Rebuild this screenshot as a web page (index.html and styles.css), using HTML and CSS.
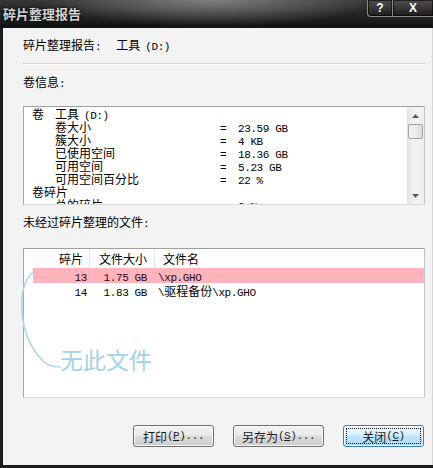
FILE: index.html
```html
<!DOCTYPE html>
<html lang="zh-CN">
<head>
<meta charset="utf-8">
<title>碎片整理报告</title>
<link rel="stylesheet" href="styles.css">
</head>
<body>
<div class="window">
  <div class="titlebar">
    <div class="title">碎片整理报告</div>
    <div class="tb-btns">
      <div class="tb-btn help">?</div>
      <div class="tb-btn xbtn">X</div>
    </div>
  </div>
  <div class="body">
    <div class="line">碎片整理报告<span class="a">:</span><span class="vol">工具</span><span class="a sp">(D:)</span></div>
    <div class="sep"></div>
    <div class="line label1">卷信息<span class="a">:</span></div>
    <div class="listbox info">
      <div class="info-content">
        <div class="irow"><span class="lead">卷</span><span>工具</span><span class="a sp">(D:)</span></div>
        <div class="irow"><span class="k ind">卷大小</span><span class="eq a">=</span><span class="a">23.59 GB</span></div>
        <div class="irow"><span class="k ind">簇大小</span><span class="eq a">=</span><span class="a">4 KB</span></div>
        <div class="irow"><span class="k ind">已使用空间</span><span class="eq a">=</span><span class="a">18.36 GB</span></div>
        <div class="irow"><span class="k ind">可用空间</span><span class="eq a">=</span><span class="a">5.23 GB</span></div>
        <div class="irow"><span class="k ind">可用空间百分比</span><span class="eq a">=</span><span class="a">22 %</span></div>
        <div class="irow"><span class="k">卷碎片</span></div>
        <div class="irow"><span class="k ind">总的碎片</span><span class="eq a">=</span><span class="a">0 %</span></div>
      </div>
      <div class="scrollbar">
        <div class="sb-btn"><svg width="7" height="4" viewBox="0 0 7 4"><polygon points="3.5,0 7,4 0,4" fill="#5c5c5c"/></svg></div>
        <div class="sb-thumb"></div>
        <div class="sb-track"></div>
        <div class="sb-btn"><svg width="7" height="4" viewBox="0 0 7 4"><polygon points="0,0 7,0 3.5,4" fill="#5c5c5c"/></svg></div>
      </div>
    </div>
    <div class="line label2">未经过碎片整理的文件<span class="a">:</span></div>
    <div class="listbox files">
      <div class="lv-head">
        <div class="h1">碎片</div>
        <div class="h2">文件大小</div>
        <div class="h3">文件名</div>
      </div>
      <div class="lv-row sel">
        <div class="c1 a">13</div>
        <div class="c2 a">1.75 GB</div>
        <div class="c3"><span class="a">\xp.GHO</span></div>
      </div>
      <div class="lv-row">
        <div class="c1 a">14</div>
        <div class="c2 a">1.83 GB</div>
        <div class="c3"><span class="a">\</span>驱程备份<span class="a">\xp.GHO</span></div>
      </div>
    </div>
    <div class="buttons">
      <div class="btn w81">打印<span class="a">(<u>P</u>)...</span></div>
      <div class="btn w91">另存为<span class="a">(<u>S</u>)...</span></div>
      <div class="btn w81 default">关闭<span class="a">(<u>C</u>)</span></div>
    </div>
  </div>
  <svg class="scribble" width="433" height="468" viewBox="0 0 433 468">
    <path d="M33 272 C24 280 21 295 22 310 C23 330 30 348 43 361 C47 365 52 367 60 367" fill="none" stroke="#a9d6e6" stroke-width="1.6" stroke-linecap="round"/>
  </svg>
  <div class="note">无此文件</div>
</div>
</body>
</html>
```

FILE: styles.css
```css
* { box-sizing: border-box; }
html, body { margin: 0; padding: 0; }
body {
  width: 433px;
  height: 468px;
  overflow: hidden;
  font-family: "Noto Sans CJK SC", "Liberation Sans", sans-serif;
  font-size: 12px;
  color: #000;
  background: #1c1c1c;
}
.a {
  font-family: "Liberation Mono", "Noto Sans CJK SC", monospace;
  font-size: 11px;
  letter-spacing: -0.4px;
}
.sp { margin-left: 5px; }

.window {
  position: relative;
  width: 433px;
  height: 468px;
  display: flex;
  flex-direction: column;
  background: #1c1c1c;
}
.titlebar {
  height: 28px;
  flex: none;
  display: flex;
  justify-content: space-between;
  align-items: flex-start;
  background:
    radial-gradient(ellipse 170px 26px at 210px 0, rgba(140,140,140,0.85), rgba(140,140,140,0) 100%),
    linear-gradient(#363636, #121212);
}
.title {
  padding-left: 3px;
  line-height: 28px;
  font-size: 13px;
  font-weight: bold;
  color: #d4d4d4;
  text-shadow: 0 0 3px #000, 0 0 1px #000;
}
.tb-btns { display: flex; }
.tb-btn {
  height: 17px;
  color: #fff;
  font: bold 12px "Liberation Sans", sans-serif;
  display: flex;
  align-items: center;
  justify-content: center;
  border: 1px solid #8a8a8a;
  border-top: 0;
  background: linear-gradient(#505050, #1c1c1c);
  box-shadow: inset 0 0 0 1px rgba(0,0,0,0.6);
}
.help { width: 26px; border-bottom-left-radius: 4px; }
.xbtn { width: 40px; border-left: 0; border-right: 0; }

.body {
  flex: 1;
  margin-left: 3px;
  margin-bottom: 3px;
  padding: 9px 7px 18px 20px;
  background: #f3f3f3;
  border-right: 1px solid #d6d6d6;
  display: flex;
  flex-direction: column;
}
.line { height: 16px; line-height: 16px; white-space: nowrap; flex: none; }
.vol { margin-left: 15px; }
.sep {
  margin-top: 10px;
  height: 2px;
  flex: none;
  border-top: 1px solid #d3d3d3;
  border-bottom: 1px solid #ffffff;
}
.label1 { margin-top: 9px; }
.label2 { margin-top: 9px; }

.listbox {
  flex: none;
  background: #fff;
  border: 1px solid;
  border-color: #9f9f9f #c4c4c4 #d8d8d8 #a6a6a6;
  overflow: hidden;
}
.info {
  margin-top: 16px;
  height: 99px;
  display: flex;
}
.info-content {
  flex: 1;
  overflow: hidden;
  padding-left: 8px;
}
.irow {
  display: flex;
  align-items: baseline;
  height: 13px;
  line-height: 13px;
  white-space: nowrap;
}
.lead { width: 23px; }
.k { width: 188px; }
.ind { padding-left: 23px; }
.eq { width: 18px; }

.scrollbar {
  width: 17px;
  flex: none;
  display: flex;
  flex-direction: column;
  background: linear-gradient(to right, #e4e4e4, #f3f3f3 45%, #efefef);
}
.sb-btn {
  height: 17px;
  flex: none;
  display: flex;
  align-items: center;
  justify-content: center;
}
.sb-thumb {
  height: 15px;
  flex: none;
  margin: 0 1px;
  border: 1px solid #a4a4a4;
  border-radius: 2px;
  background: linear-gradient(to right, #f4f4f4, #e0e0e0);
}
.sb-track { flex: 1; }

.files {
  margin-top: 18px;
  height: 150px;
}
.lv-head {
  display: grid;
  grid-template-columns: 66px 65px 1fr;
  height: 19px;
  line-height: 19px;
  background: #fdfdfd;
}
.lv-head > div { border-right: 1px solid #e6e6e6; }
.lv-head > div:last-child { border-right: 0; }
.h1 { text-align: right; padding-right: 6px; }
.h2 { text-align: right; padding-right: 7px; }
.h3 { padding-left: 8px; }
.lv-row {
  display: grid;
  grid-template-columns: 57px 65px 1fr;
  align-items: baseline;
  margin-left: 9px;
  height: 15px;
  line-height: 15px;
  white-space: nowrap;
}
.sel { background: #ffb3bd; color: #2a0a10; }
.c1 { text-align: right; padding-right: 3px; }
.c2 { text-align: right; padding-right: 8px; }
.c3 { padding-left: 3px; }

.buttons {
  margin-top: 27px;
  height: 22px;
  flex: none;
  display: flex;
  justify-content: flex-end;
  gap: 19px;
  padding-right: 1px;
}
.btn {
  position: relative;
  height: 22px;
  border: 1px solid #707070;
  border-radius: 3px;
  background: linear-gradient(#f2f2f2 0%, #ebebeb 45%, #dbdbdb 52%, #cdcdcd 100%);
  box-shadow: inset 0 0 0 1px #fafafa;
  display: flex;
  align-items: center;
  justify-content: center;
  color: #1b1b1b;
  white-space: nowrap;
}
.w81 { width: 81px; }
.w91 { width: 91px; }
.btn u { text-decoration: underline; }
.default {
  border-color: #3c7fb1;
  background: linear-gradient(#eaf6fd 0%, #d9f0fc 45%, #bee6fd 52%, #a7d9f5 100%);
}
.default::after {
  content: "";
  position: absolute;
  inset: 2px;
  border: 1px dotted #1a1a1a;
}

.scribble {
  position: absolute;
  left: 0;
  top: 0;
  pointer-events: none;
}
.note {
  position: absolute;
  left: 60px;
  top: 348px;
  font-size: 23px;
  line-height: 23px;
  color: #a3d2e4;
  white-space: nowrap;
}
```
